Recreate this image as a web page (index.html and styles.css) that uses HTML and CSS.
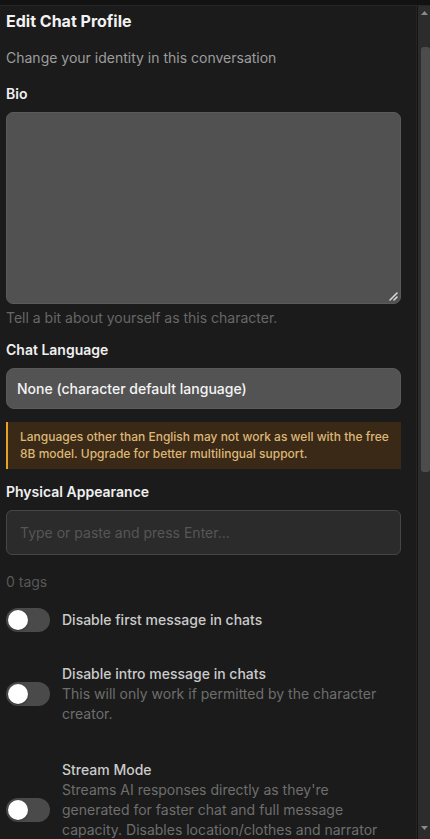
FILE: index.html
```html
<!DOCTYPE html>
<html lang="en">
<head>
<meta charset="utf-8">
<title>Edit Chat Profile</title>
<link rel="stylesheet" href="styles.css">
</head>
<body>
<div class="topstrip"></div>
<div class="frame">
  <main class="panel">
    <h1 class="title">Edit Chat Profile</h1>
    <p class="subtitle">Change your identity in this conversation</p>

    <label class="label label-bio">Bio</label>
    <div class="textarea"><svg class="grip" width="10" height="10" viewBox="0 0 10 10"><path d="M9 2 L2 9 M9 6 L6 9" stroke="#d8d8d8" stroke-width="1.6" stroke-linecap="round"/></svg></div>
    <p class="hint">Tell a bit about yourself as this character.</p>

    <label class="label label-lang">Chat Language</label>
    <div class="select">None (character default language)</div>

    <div class="warning">Languages other than English may not work as well with the free 8B model. Upgrade for better multilingual support.</div>

    <label class="label label-appear">Physical Appearance</label>
    <div class="tag-input">Type or paste and press Enter...</div>
    <p class="tag-count">0 tags</p>

    <div class="toggle-row row-first">
      <span class="switch"><span class="knob"></span></span>
      <div class="toggle-text"><div class="toggle-title">Disable first message in chats</div></div>
    </div>

    <div class="toggle-row row-intro">
      <span class="switch"><span class="knob"></span></span>
      <div class="toggle-text">
        <div class="toggle-title">Disable intro message in chats</div>
        <div class="toggle-desc">This will only work if permitted by the character creator.</div>
      </div>
    </div>

    <div class="toggle-row row-stream">
      <span class="switch"><span class="knob"></span></span>
      <div class="toggle-text">
        <div class="toggle-title">Stream Mode</div>
        <div class="toggle-desc">Streams AI responses directly as they're generated for faster chat and full message capacity. Disables location/clothes and narrator tracking.</div>
      </div>
    </div>
  </main>
  <div class="scrollbar">
    <svg class="arrow" width="11" height="10" viewBox="0 0 11 10"><path d="M2 7 L5.5 3 L9 7 Z" fill="#8a8a8a"/></svg>
    <div class="thumb"></div>
    <div class="track-fill"></div>
    <svg class="arrow" width="11" height="10" viewBox="0 0 11 10"><path d="M2 3 L5.5 7 L9 3 Z" fill="#8a8a8a"/></svg>
  </div>
</div>
</body>
</html>
```

FILE: styles.css
```css
* { box-sizing: border-box; }
html, body {
  margin: 0;
  padding: 0;
  height: 839px;
  overflow: hidden;
  background: #131313;
  font-family: Inter, "Noto Sans", "Liberation Sans", sans-serif;
  -webkit-font-smoothing: antialiased;
}
.topstrip {
  height: 5px;
  background: #121212;
}
.frame {
  display: flex;
  height: 834px;
  border-top: 1px solid #262626;
}
.panel {
  width: 417px;
  flex: none;
  background: #1b1b1b;
  border-right: 1px solid #242424;
  padding: 3px 15px 0 6px;
  overflow: hidden;
}
.title {
  margin: 0;
  font-size: 16px;
  line-height: 24px;
  font-weight: 700;
  color: #f2f2f2;
}
.subtitle {
  margin: 15px 0 0;
  font-size: 14px;
  line-height: 20px;
  color: #9d9d9d;
}
.label {
  display: block;
  font-size: 14px;
  line-height: 20px;
  font-weight: 600;
  color: #f0f0f0;
}
.label-bio { margin-top: 16px; }
.textarea {
  margin-top: 8px;
  height: 192px;
  background: #515151;
  border: 1px solid #5a5a5a;
  border-radius: 7px;
  display: flex;
  align-items: flex-end;
  justify-content: flex-end;
  padding: 2px;
}
.grip { display: block; }
.hint {
  margin: 4px 0 0;
  font-size: 14px;
  line-height: 20px;
  color: #676767;
}
.label-lang { margin-top: 12px; }
.select {
  margin-top: 8px;
  height: 41px;
  background: #535353;
  border: 1px solid #5a5a5a;
  border-radius: 8px;
  padding: 0 10px;
  display: flex;
  align-items: center;
  font-size: 14px;
  color: #f4f4f4;
  font-weight: 500;
}
.warning {
  margin-top: 13px;
  background: #3b2918;
  border-left: 2px solid #e8a325;
  padding: 6px 10px 7px 12px;
  font-size: 12px;
  line-height: 17px;
  color: #dcb876;
  font-weight: 500;
}
.label-appear { margin-top: 13px; }
.tag-input {
  margin-top: 8px;
  height: 45px;
  background: #2b2b2b;
  border: 1px solid #464646;
  border-radius: 6px;
  padding: 0 13px;
  display: flex;
  align-items: center;
  font-size: 14px;
  color: #565656;
}
.tag-count {
  margin: 17px 0 0;
  font-size: 14px;
  line-height: 20px;
  color: #585858;
}
.toggle-row {
  display: flex;
  align-items: center;
  gap: 12px;
}
.row-first { margin-top: 16px; }
.row-intro { margin-top: 32px; }
.row-stream { margin-top: 36px; }
.switch {
  flex: none;
  width: 44px;
  height: 24px;
  border-radius: 12px;
  background: #4a4a4a;
  display: flex;
  align-items: center;
  padding: 0 2px;
}
.knob {
  width: 20px;
  height: 20px;
  border-radius: 50%;
  background: #ffffff;
  box-shadow: 0 1px 2px rgba(0,0,0,0.3);
}
.toggle-text { flex: 1; min-width: 0; padding-right: 6px; }
.toggle-title {
  font-size: 14px;
  line-height: 20px;
  font-weight: 500;
  color: #cbcbcb;
}
.toggle-desc {
  font-size: 14px;
  line-height: 20px;
  color: #6e6e6e;
}
.scrollbar {
  flex: none;
  width: 12px;
  margin-left: 1px;
  background: #2c2c2c;
  display: flex;
  flex-direction: column;
  align-items: center;
}
.arrow { display: block; margin-top: 2px; flex: none; }
.thumb {
  margin-top: 29px;
  width: 9px;
  height: 425px;
  border-radius: 3px;
  background: #4c4c4c;
  margin-left: 3px;
  flex: none;
}
.track-fill { flex: 1; }
.scrollbar .arrow:last-child { margin: 0 0 6px; }
```
